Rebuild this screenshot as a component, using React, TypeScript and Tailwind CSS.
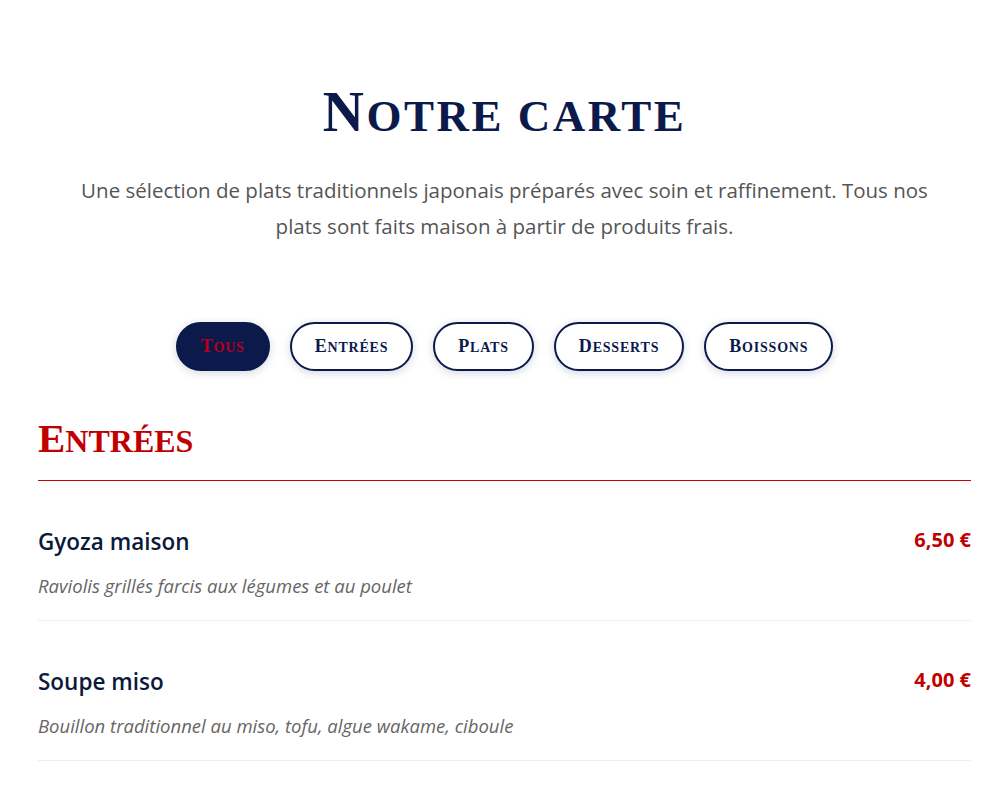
import { useState } from 'react';

const categories = ['Tous', 'Entrées', 'Plats', 'Desserts', 'Boissons'];

const entrees = [
    { name: 'Gyoza maison', desc: 'Raviolis grillés farcis aux légumes et au poulet', price: '6,50 €' },
    { name: 'Soupe miso', desc: 'Bouillon traditionnel au miso, tofu, algue wakame, ciboule', price: '4,00 €' },
];

const serif = "[font-family:'Liberation_Serif',serif]";
const sans = "[font-family:'Open_Sans',sans-serif]";

// Cinzel-like small caps: bigger first letter, the rest in smaller capitals
function SmallCaps(props: { text: string; first: string; rest: string }) {
    return (
        <>
            <span className={props.first}>{props.text.charAt(0).toUpperCase()}</span>
            <span className={props.rest}>{props.text.slice(1).toUpperCase()}</span>
        </>
    );
}

function App() {
    const [active, setActive] = useState('Tous');

    return (
        <div className={`min-h-screen bg-white ${sans}`}>
            <div className="ml-[38px] mr-[34px] pt-[80px]">
                <h1 className={`${serif} text-center font-bold leading-[64px] tracking-[2.5px] text-[#0b1a4b]`}>
                    <SmallCaps text="Notre carte" first="text-[57px]" rest="text-[45px]" />
                </h1>
                <p className="mx-auto mt-[14px] max-w-[880px] text-center text-[20.5px] leading-[36px] text-[#555555]">
                    Une sélection de plats traditionnels japonais préparés avec soin et raffinement. Tous nos plats sont
                    faits maison à partir de produits frais.
                </p>

                <div className="mt-[78px] flex justify-center gap-[20px]">
                    {categories.map((c) => (
                        <button
                            key={c}
                            type="button"
                            onClick={() => setActive(c)}
                            className={`${serif} h-[49px] rounded-full border-2 border-[#0b1a4b] px-[23px] font-bold tracking-[0.8px] shadow-[0_2px_8px_rgba(11,26,75,0.18)] ${
                                active === c ? 'bg-[#0b1a4b] text-[#b3001b]' : 'bg-white text-[#0b1a4b]'
                            }`}
                        >
                            <SmallCaps text={c} first="text-[18px]" rest="text-[14px]" />
                        </button>
                    ))}
                </div>

                <h2 className={`${serif} mt-[44px] font-bold leading-[46px] text-[#c00000]`}>
                    <SmallCaps text="Entrées" first="text-[41px]" rest="text-[32px]" />
                </h2>
                <div className="mt-[10px] h-px bg-[#cc0000]" />

                <div>
                    {entrees.map((item) => (
                        <div key={item.name} className="border-b border-[#eeeeee] pt-[46px] pb-[22px]">
                            <div className="flex items-start justify-between">
                                <h3 className="text-[22.5px] font-semibold leading-[30px] text-[#0b1a3b]">{item.name}</h3>
                                <span className="text-[20px] font-bold leading-[26px] text-[#c00000]">{item.price}</span>
                            </div>
                            <p className="mt-[17px] text-[18.5px] italic leading-[24px] text-[#666666]">{item.desc}</p>
                        </div>
                    ))}
                </div>
            </div>
        </div>
    );
}

export default App;
